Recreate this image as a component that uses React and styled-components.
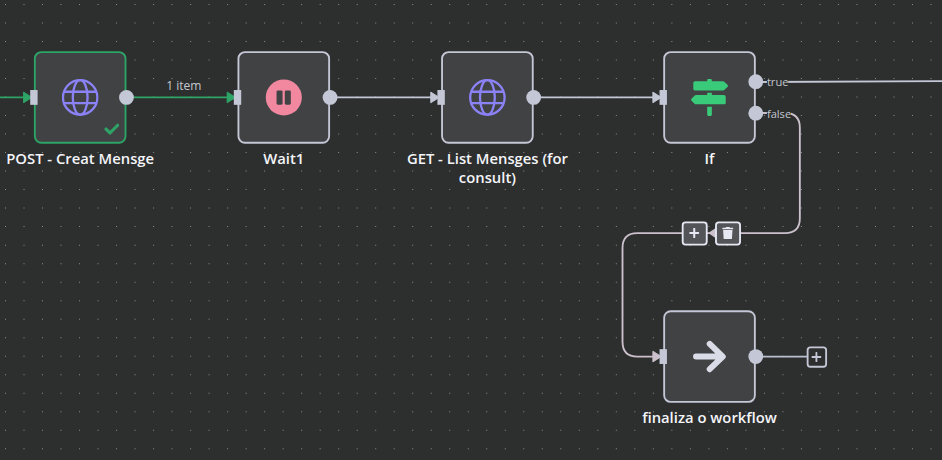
import React from "react";
import styled, { createGlobalStyle } from "styled-components";
import { FaCheck, FaMapSigns, FaTrash } from "react-icons/fa";

const GlobalStyle = createGlobalStyle`
  body { margin: 0; background: #2d2e2e; overflow: hidden; }
`;

const ZOOM = 0.9255;
const SUCCESS = "#2ca566";
const LINE = "#c4c8d6";
const ROSE = "#cbc0cb";

const Canvas = styled.main`
  position: relative;
  width: 942px;
  height: 460px;
  overflow: hidden;
  background: #2d2e2e;
  font-family: "Open Sans", sans-serif;
`;

const Dots = styled.svg`
  position: absolute;
  inset: 0;
  display: block;
`;

const World = styled.div`
  position: absolute;
  left: 0;
  top: 0;
  transform-origin: 0 0;
  transform: translate(33.9px, 51.15px) scale(${ZOOM});
`;

const Edges = styled.svg`
  position: absolute;
  left: 0;
  top: 0;
  width: 1px;
  height: 1px;
  overflow: visible;
  fill: none;
  stroke-width: 2px;
`;

const NodeFrame = styled.section`
  position: absolute;
  left: ${(p) => p.$x}px;
  top: ${(p) => p.$y}px;
  width: 100px;
  display: flex;
  flex-direction: column;
  align-items: center;
  gap: 6px;
`;

const NodeBox = styled.div`
  box-sizing: border-box;
  width: 100px;
  height: 100px;
  display: grid;
  grid-template-columns: 18px 1fr 18px;
  align-items: center;
  justify-items: center;
  border: 2px solid ${(p) => (p.$done ? SUCCESS : LINE)};
  border-radius: 8px;
  background: #414244;
`;

const NodeIcon = styled.div`
  display: flex;
  position: relative;
`;

const NodeName = styled.div`
  width: 190px;
  text-align: center;
  font-size: 16px;
  line-height: 20.8px;
  font-weight: 600;
  color: #f4f5f9;
`;

const InputPort = styled.span`
  justify-self: start;
  width: 8px;
  height: 16px;
  margin-left: -6px;
  background: ${LINE};
`;

const Outputs = styled.div`
  justify-self: start;
  display: flex;
  flex-direction: column;
  gap: 18px;
  margin-left: 12px;
`;

const Output = styled.div`
  display: flex;
  align-items: center;
  gap: 4px;
  width: 60px;
  height: 16px;
  margin-right: -60px;
`;

const OutputPort = styled.span`
  flex: none;
  width: 16px;
  height: 16px;
  border-radius: 50%;
  background: ${LINE};
`;

const PortLabel = styled.span`
  margin-top: 1.5px;
  font-size: 12px;
  line-height: 14px;
  color: #c4c8d0;
  background: #2d2e2e;
`;

const DoneMark = styled(FaCheck)`
  position: absolute;
  right: -22px;
  bottom: -22.5px;
  font-size: 16.5px;
  color: ${SUCCESS};
`;

const ItemCount = styled.div`
  position: absolute;
  left: 122px;
  top: 28px;
  width: 80px;
  text-align: center;
  font-size: 13px;
  line-height: 18px;
  color: #c4c8d0;
`;

const EdgeTools = styled.div`
  position: absolute;
  left: 699.5px;
  top: 183.6px;
  display: flex;
  gap: 8px;
`;

const ToolButton = styled.button`
  box-sizing: border-box;
  display: flex;
  align-items: center;
  justify-content: center;
  width: 28px;
  height: 26px;
  padding: 0;
  border: 2px solid #e6e9f3;
  border-radius: 4px;
  background: #535457;
  color: #e6e9f3;
  font-size: 13.5px;
`;

const AddButton = styled.button`
  position: absolute;
  left: 834.5px;
  top: 318.5px;
  box-sizing: border-box;
  display: flex;
  align-items: center;
  justify-content: center;
  width: 22.5px;
  height: 23px;
  padding: 0;
  border: 2px solid ${LINE};
  border-radius: 4px;
  background: #2d2e2e;
  color: ${LINE};
`;

const Plus = ({ size, weight }) => (
  <svg width={size} height={size} viewBox="0 0 10 10" stroke="currentColor" strokeWidth={weight} strokeLinecap="round">
    <path d="M5 .9V9.1M.9 5H9.1" />
  </svg>
);

const Globe = () => (
  <svg width="40" height="40" viewBox="0 0 40 40" fill="none" stroke="#8b82f6" strokeWidth="2.5">
    <circle cx="20" cy="20" r="18.6" />
    <ellipse cx="20" cy="20" rx="8" ry="18.6" />
    <path d="M2.5 13.9H37.5M2.5 26.1H37.5" />
  </svg>
);

const Pause = () => (
  <svg width="40" height="40" viewBox="0 0 40 40">
    <circle cx="20" cy="20" r="19.5" fill="#f188a0" />
    <rect x="12.2" y="12.4" width="6.5" height="15.4" rx="1.4" fill="#414244" />
    <rect x="21.1" y="12.4" width="6.5" height="15.4" rx="1.4" fill="#414244" />
  </svg>
);

const ArrowRight = () => (
  <svg width="40" height="40" viewBox="0 0 40 40" fill="none" stroke="#dadde8" strokeWidth="6.4" strokeLinecap="round" strokeLinejoin="round">
    <path d="M5.4 20H33M20.2 6.3L34.3 20L20.2 33.7" />
  </svg>
);

const nodes = [
  { name: "POST - Creat Mensge", x: 0, y: 0, done: true, icon: <Globe />, outputs: [""] },
  { name: "Wait1", x: 220, y: 0, icon: <Pause />, outputs: [""] },
  { name: "GET - List Mensges (for consult)", x: 440, y: 0, icon: <Globe />, outputs: [""] },
  { name: "If", x: 680, y: 0, icon: <FaMapSigns size={40} color="#3acb7a" />, outputs: ["true", "false"] },
  { name: "finaliza o workflow", x: 680, y: 280, icon: <ArrowRight />, outputs: [""] },
];

const DOT_PITCH = 18.51;
const dots = [];
for (let row = 0; row < 25; row += 1) {
  for (let col = 0; col < 51; col += 1) {
    dots.push(`M${(5 + col * DOT_PITCH).toFixed(2)} ${(4 + row * DOT_PITCH).toFixed(2)}h1v1h-1z`);
  }
}

const Arrow = ({ x, y, color }) => (
  <path d={`M${x - 11.2} ${y - 5.8}L${x - 2} ${y}L${x - 11.2} ${y + 5.8}Z`} fill={color} stroke={color} strokeWidth="1" strokeLinejoin="round" />
);

const WorkflowNode = ({ node }) => (
  <NodeFrame $x={node.x} $y={node.y}>
    <NodeBox $done={node.done}>
      <InputPort />
      <NodeIcon>
        {node.icon}
        {node.done && <DoneMark />}
      </NodeIcon>
      <Outputs>
        {node.outputs.map((label) => (
          <Output key={label}>
            <OutputPort />
            {label && <PortLabel>{label}</PortLabel>}
          </Output>
        ))}
      </Outputs>
    </NodeBox>
    <NodeName>{node.name}</NodeName>
  </NodeFrame>
);

export default function App() {
  return (
    <>
      <GlobalStyle />
      <Canvas>
        <Dots width="942" height="460">
          <path d={dots.join("")} fill="#8d8e8e" />
        </Dots>
        <World>
          <Edges>
            <path d="M-40 50H-10M100 50H210" stroke={SUCCESS} />
            <path d="M320 50H430M540 50H670" stroke={LINE} />
            <path d="M780 33.4C850 33.4 920 32.4 985 32.4" stroke={LINE} />
            <path
              d="M780 66.8H811.6Q827.6 66.8 827.6 82.8V180.6Q827.6 196.6 811.6 196.6H652Q636 196.6 636 212.6V314Q636 330 652 330H670"
              stroke={ROSE}
            />
            <path d="M780 330H836" stroke="#b9bfcd" />
            <Arrow x={0} y={50} color={SUCCESS} />
            <Arrow x={220} y={50} color={SUCCESS} />
            <Arrow x={440} y={50} color={LINE} />
            <Arrow x={680} y={50} color={LINE} />
            <Arrow x={680} y={330} color={ROSE} />
            <path d="M728.5 196.6L740 189V204.2Z" fill={ROSE} />
          </Edges>
          {nodes.map((node) => (
            <WorkflowNode key={node.name} node={node} />
          ))}
          <ItemCount>1 item</ItemCount>
          <EdgeTools>
            <ToolButton aria-label="Add node"><Plus size={11} weight={2} /></ToolButton>
            <ToolButton aria-label="Delete connection"><FaTrash /></ToolButton>
          </EdgeTools>
          <AddButton aria-label="Add next node"><Plus size={11} weight={1.8} /></AddButton>
        </World>
      </Canvas>
    </>
  );
}
